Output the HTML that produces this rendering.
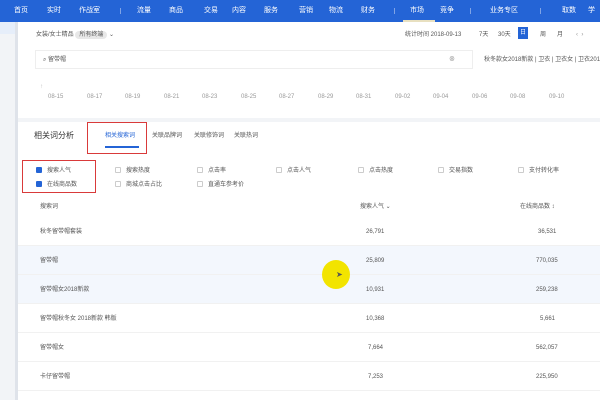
<!DOCTYPE html>
<html><head><meta charset="utf-8"><style>
*{margin:0;padding:0;box-sizing:border-box}
body{width:600px;height:400px;overflow:hidden;background:#f2f4f7;font-family:"Liberation Sans","Noto Sans CJK SC",sans-serif;font-size:6px;line-height:8px;color:#555;position:relative}
.a{position:absolute;white-space:nowrap}
.nav{position:absolute;left:0;top:0;width:600px;height:22px;background:#2464d6}
.nav span{position:absolute;top:7px;color:#fff;font-size:7px;line-height:8px}
.card{position:absolute;background:#fff}
.cb{display:inline-block;width:6px;height:6px;border:1px solid #ccc;vertical-align:middle;margin-right:5px;border-radius:1px}
.cb.on{background:#2464d6;border-color:#2464d6}
.row{position:absolute;left:18px;width:582px;height:29px;border-bottom:1px solid #f1f1f1}
.red{position:absolute;border:1.5px solid #d93a3a}
</style></head><body>
<div class="nav">
<span style="left:14px">首页</span><span style="left:47px">实时</span><span style="left:79px">作战室</span>
<div class="a" style="left:120px;top:8px;width:1px;height:6px;background:#7fa3e6"></div>
<span style="left:137px">流量</span><span style="left:169px">商品</span><span style="left:204px">交易</span><span style="left:232px">内容</span><span style="left:264px">服务</span><span style="left:299px">营销</span><span style="left:329px">物流</span><span style="left:361px">财务</span>
<div class="a" style="left:394px;top:8px;width:1px;height:6px;background:#7fa3e6"></div>
<span style="left:410px">市场</span><span style="left:440px">竞争</span>
<div class="a" style="left:470px;top:8px;width:1px;height:6px;background:#7fa3e6"></div>
<span style="left:490px">业务专区</span>
<div class="a" style="left:540px;top:8px;width:1px;height:6px;background:#7fa3e6"></div>
<span style="left:562px">取数</span><span style="left:588px">学</span>
<div class="a" style="left:403px;top:20px;width:32px;height:2px;background:#e8e0c0"></div>
</div>
<div class="a" style="left:0;top:22px;width:16px;height:12px;background:#e6eefa"></div>
<div class="a" style="left:15px;top:22px;width:3px;height:378px;background:#dfe3ea"></div>
<div class="card" style="left:18px;top:22px;width:582px;height:96px">
<div class="a" style="left:18px;top:9px">女装/女士精品 <span style="background:#e8e8e8;border-radius:6px;padding:1px 4px">所有终端</span> ⌄</div>
<div class="a" style="left:387px;top:9px">统计时间 2018-09-13</div>
<div class="a" style="left:461px;top:9px">7天</div><div class="a" style="left:480px;top:9px">30天</div>
<div class="a" style="left:500px;top:5px;width:10px;height:12px;background:#2464d6;color:#fff;text-align:center;line-height:12px">日</div>
<div class="a" style="left:522px;top:9px">周</div><div class="a" style="left:539px;top:9px">月</div><div class="a" style="left:558px;top:9px;color:#999">‹ &nbsp;›</div>
<div class="a" style="left:17px;top:28px;width:438px;height:19px;border:1px solid #eee"></div>
<div class="a" style="left:25px;top:34px">⌕ 留带帽</div><div class="a" style="left:431px;top:34px;color:#888">⊗</div>
<div class="a" style="left:466px;top:34px">秋冬款女2018新款 | 卫衣 | 卫衣女 | 卫衣2018新</div>
<div class="a" style="left:22px;top:61px;color:#bbb">↑</div>
<div class="a" style="left:30px;top:71px;color:#999">
<span class="a" style="left:0">08-15</span><span class="a" style="left:39px">08-17</span><span class="a" style="left:77px">08-19</span><span class="a" style="left:116px">08-21</span><span class="a" style="left:154px">08-23</span><span class="a" style="left:193px">08-25</span><span class="a" style="left:231px">08-27</span><span class="a" style="left:270px">08-29</span><span class="a" style="left:308px">08-31</span><span class="a" style="left:347px">09-02</span><span class="a" style="left:385px">09-04</span><span class="a" style="left:424px">09-06</span><span class="a" style="left:462px">09-08</span><span class="a" style="left:501px">09-10</span></div>
</div>
<div class="card" style="left:18px;top:122px;width:582px;height:278px"></div>
<div class="a" style="left:34px;top:131px;font-size:8px;line-height:10px;color:#333">相关词分析</div>
<div class="a" style="left:105px;top:132px;color:#2464d6">相关搜索词</div>
<div class="a" style="left:105px;top:146px;width:34px;height:1.5px;background:#2464d6"></div>
<div class="a" style="left:152px;top:132px">关联品牌词</div><div class="a" style="left:194px;top:132px">关联修饰词</div><div class="a" style="left:234px;top:132px">关联热词</div>
<div class="red" style="left:87px;top:122px;width:60px;height:32px"></div>
<div class="a" style="left:36px;top:167px"><span class="cb on"></span>搜索人气</div>
<div class="a" style="left:36px;top:181px"><span class="cb on"></span>在线商品数</div>
<div class="red" style="left:22px;top:160px;width:74px;height:33px"></div>
<div class="a" style="left:115px;top:167px"><span class="cb"></span>搜索热度</div>
<div class="a" style="left:115px;top:181px"><span class="cb"></span>商城点击占比</div>
<div class="a" style="left:197px;top:167px"><span class="cb"></span>点击率</div>
<div class="a" style="left:197px;top:181px"><span class="cb"></span>直通车参考价</div>
<div class="a" style="left:276px;top:167px"><span class="cb"></span>点击人气</div>
<div class="a" style="left:358px;top:167px"><span class="cb"></span>点击热度</div>
<div class="a" style="left:438px;top:167px"><span class="cb"></span>交易指数</div>
<div class="a" style="left:518px;top:167px"><span class="cb"></span>支付转化率</div>
<div class="a" style="left:40px;top:203px">搜索词</div>
<div class="a" style="left:360px;top:203px">搜索人气 ⌄</div>
<div class="a" style="left:520px;top:203px">在线商品数 ↕</div>
<div class="row" style="top:217px"></div>
<div class="row" style="top:246px;background:#f3f7fd"></div>
<div class="row" style="top:275px;background:#f3f7fd"></div>
<div class="row" style="top:304px"></div>
<div class="row" style="top:333px"></div>
<div class="row" style="top:362px"></div>
<div class="a" style="left:40px;top:228px">秋冬留带帽套装</div><div class="a" style="left:366px;top:228px">26,791</div><div class="a" style="left:538px;top:228px">36,531</div>
<div class="a" style="left:40px;top:257px">留带帽</div><div class="a" style="left:366px;top:257px">25,809</div><div class="a" style="left:536px;top:257px">770,035</div>
<div class="a" style="left:40px;top:286px">留带帽女2018新款</div><div class="a" style="left:366px;top:286px">10,931</div><div class="a" style="left:536px;top:286px">259,238</div>
<div class="a" style="left:40px;top:315px">留带帽秋冬女 2018新款 韩版</div><div class="a" style="left:366px;top:315px">10,368</div><div class="a" style="left:540px;top:315px">5,661</div>
<div class="a" style="left:40px;top:344px">留带帽女</div><div class="a" style="left:368px;top:344px">7,664</div><div class="a" style="left:536px;top:344px">562,057</div>
<div class="a" style="left:40px;top:373px">卡仔留带帽</div><div class="a" style="left:368px;top:373px">7,253</div><div class="a" style="left:536px;top:373px">225,950</div>
<div class="a" style="left:322px;top:260px;width:28px;height:29px;border-radius:50%;background:#f2e400"></div>
<div class="a" style="left:336px;top:271px;font-size:8px;color:#555">➤</div>
</body></html>
